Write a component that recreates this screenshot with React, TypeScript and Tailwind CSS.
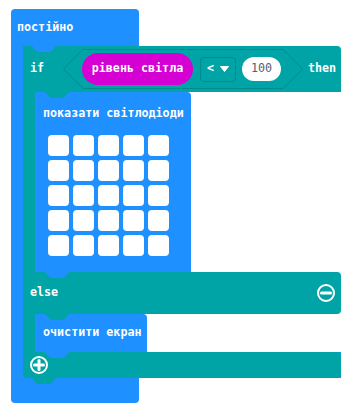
import React from "react";

function Bump({ color, className }: { color: string; className: string }) {
  return (
    <svg
      className={"absolute z-10 " + className}
      width="26"
      height="6"
      viewBox="0 0 26 6"
    >
      <path d="M0 0 C3 0 4 6 8 6 H18 C22 6 23 0 26 0 Z" fill={color} />
    </svg>
  );
}

const BLUE = "#1e90ff";
const TEAL = "#00a4a6";

function CircleIcon({ plus }: { plus?: boolean }) {
  return (
    <svg width="20" height="20" viewBox="0 0 20 20">
      <circle cx="10" cy="10" r="8" fill="none" stroke="white" strokeWidth="2" />
      <line x1="5.5" y1="10" x2="14.5" y2="10" stroke="white" strokeWidth="3" strokeLinecap="round" />
      {plus && (
        <line x1="10" y1="5.5" x2="10" y2="14.5" stroke="white" strokeWidth="3" strokeLinecap="round" />
      )}
    </svg>
  );
}

function ShowLeds() {
  const cells = Array.from({ length: 25 });
  return (
    <div className="relative w-[156px] h-[180px] bg-[#1e90ff] rounded-tr-[4px] pl-[8px] pt-[13px] flex flex-col items-start">
      <Bump color={TEAL} className="left-[9px] top-0" />
      <Bump color={BLUE} className="left-[9px] top-full" />
      <div className="h-[16px] leading-[16px]">показати світлодіоди</div>
      <div className="mt-[14px] ml-[5px] grid grid-cols-5 gap-[4px]">
        {cells.map((_, i) => (
          <div key={i} className="w-[21px] h-[21px] rounded-[4px] bg-white" />
        ))}
      </div>
    </div>
  );
}

function ClearBlock() {
  return (
    <div className="relative w-[112px] h-[38px] bg-[#1e90ff] rounded-tr-[4px] pl-[8px] flex items-center">
      <Bump color={TEAL} className="left-[9px] top-0" />
      <Bump color={BLUE} className="left-[9px] top-full" />
      <span>очистити екран</span>
    </div>
  );
}

function Condition() {
  return (
    <div className="relative w-[240px] h-[40px] flex items-center pl-[19px]">
      <svg className="absolute left-0 top-0" width="240" height="40" viewBox="0 0 240 40">
        <polygon
          points="0.5,20 20,0.5 220,0.5 239.5,20 220,39.5 20,39.5"
          fill={TEAL}
          stroke="#008a8c"
          strokeWidth="1"
        />
      </svg>
      <div className="relative flex items-center">
        <div className="h-[32px] w-[111px] rounded-full bg-[#d400d4] flex items-center justify-center">
          рівень світла
        </div>
        <div className="ml-[7px] h-[25px] w-[36px] rounded-[4px] border border-[#008a8c] flex items-center justify-center gap-[6px]">
          <span>&lt;</span>
          <svg width="9" height="6" viewBox="0 0 9 6">
            <path d="M0.5 0.5 H8.5 L4.5 5.5 Z" fill="white" stroke="white" strokeLinejoin="round" />
          </svg>
        </div>
        <div className="ml-[6px] h-[24px] w-[39px] rounded-full bg-white text-[#575e75] font-normal flex items-center justify-center">
          100
        </div>
      </div>
    </div>
  );
}

function IfBlock() {
  return (
    <div className="relative flex flex-col items-start">
      <Bump color={BLUE} className="left-[8px] top-0" />
      <div className="w-[318px] h-[46px] bg-[#00a4a6] rounded-tr-[4px] flex items-center pl-[7px]">
        <span className="w-[14px]">if</span>
        <div className="ml-[19px]">
          <Condition />
        </div>
        <span className="ml-[5px]">then</span>
      </div>
      <div className="flex">
        <div className="w-[12px] bg-[#00a4a6]" />
        <ShowLeds />
      </div>
      <div className="w-[318px] h-[42px] bg-[#00a4a6] rounded-r-[4px] flex items-center justify-between pl-[7px] pr-[5px]">
        <span>else</span>
        <CircleIcon />
      </div>
      <div className="flex">
        <div className="w-[12px] bg-[#00a4a6]" />
        <ClearBlock />
      </div>
      <div className="bg-[#1e90ff]">
        <div className="w-[318px] h-[26px] bg-[#00a4a6] rounded-r-[4px] rounded-bl-[4px] flex items-center pl-[6px]">
          <CircleIcon plus />
        </div>
      </div>
      <Bump color={TEAL} className="left-[8px] top-full" />
    </div>
  );
}

export default function App() {
  return (
    <div
      className="w-[350px] h-[416px] bg-white pt-[9px] pl-[11px] text-white font-bold text-[11.7px]"
      style={{ fontFamily: '"DejaVu Sans Mono", monospace' }}
    >
      <div className="flex flex-col items-start">
        <div className="w-[128px] h-[37px] bg-[#1e90ff] rounded-t-[4px] flex items-center pl-[6px]">
          постійно
        </div>
        <div className="flex">
          <div className="w-[12px] bg-[#1e90ff]" />
          <IfBlock />
        </div>
        <div className="w-[128px] h-[25px] bg-[#1e90ff] rounded-b-[4px]" />
      </div>
    </div>
  );
}
